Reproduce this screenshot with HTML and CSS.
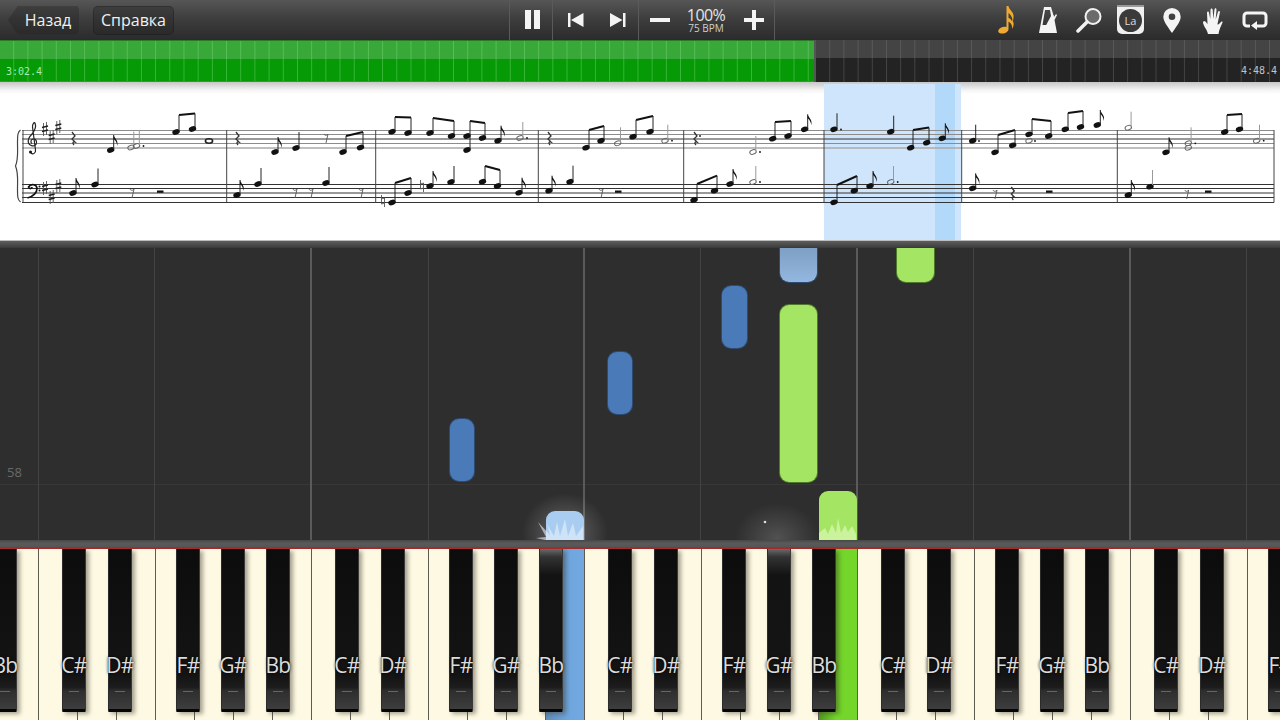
FILE: index.html
```html
<!DOCTYPE html>
<html lang="ru">
<head>
<meta charset="utf-8">
<title>Synthesia</title>
<link rel="stylesheet" href="styles.css">
</head>
<body>
<div class="app">
  <header class="topbar">
    <div class="nav">
      <div class="btn back">Назад</div>
      <div class="btn help">Справка</div>
    </div>
    <div class="cell pause"><svg width="16" height="20" viewBox="0 0 16 20"><path class="ic" d="M0 0h6v19H0zM9 0h6v19H9z"/></svg></div>
    <div class="cell skip">
      <svg width="16" height="14" viewBox="0 0 16 14"><path class="ic" d="M0 0h2.500v14H0zM15.500 0v14L3 7z"/></svg>
      <svg width="16" height="14" viewBox="0 0 16 14"><path class="ic" d="M13 0h2.500v14H13zM0 0v14L12.500 7z"/></svg>
    </div>
    <div class="cell tempo">
      <svg width="20" height="4" viewBox="0 0 20 4"><path class="ic" d="M0 0h20v4H0z"/></svg>
      <div class="speed"><div class="pct">100%</div><div class="bpm">75 BPM</div></div>
      <svg width="20" height="20" viewBox="0 0 20 20"><path class="ic" d="M8 0h4v8h8v4h-8v8H8v-8H0V8h8z"/></svg>
    </div>
    <div class="tools">
      <svg width="20" height="28" viewBox="0 0 20 28"><path class="gold" d="M9.500 0H11.500c.5 4 6 6 5 11.500-.3 1.500-.3 2.500-.5 4 1.500 3 0 6-1 7.500.5-3-.5-6-3.500-7.500V23c0 2.500-3 4.500-6 4.500-3 .3-5-1.500-4-3.500 1-2.500 5-4 8-3zM11.500 7v5c2 .5 3 2 3.700 3.500.8-3-1-6.500-3.700-8.500z"/></svg>
      <svg class="wide" width="18" height="26" viewBox="0 0 18 26"><path class="ic" fill-rule="evenodd" d="M5 0h7l3 10 2-3 1 1-2.500 5L18 26H0zM6 3 3.500 18h3.700L12 9l-1-6z"/><path class="ic" d="M9 18 14 8l1 1-4 9z"/></svg>
      <svg width="27" height="26" viewBox="0 0 27 26"><circle cx="17" cy="9.500" r="7.500" fill="#6b6b6b" stroke="#f2f2f2" stroke-width="2"/><path d="M11 15 2 24" stroke="#f2f2f2" stroke-width="3.500" stroke-linecap="round"/></svg>
      <div class="la"><span>La</span></div>
      <svg width="18" height="25" viewBox="0 0 18 25"><path class="ic" fill-rule="evenodd" d="M9 0a8.700 8.700 0 0 1 8.700 8.700C17.700 14 12 20 9 25 6 20 .300 14 .300 8.700A8.700 8.700 0 0 1 9 0zm0 5.500a3.300 3.300 0 1 0 0 6.600 3.300 3.300 0 0 0 0-6.600z"/></svg>
      <svg class="wide" width="20" height="27" viewBox="0 0 20 27"><path class="ic" d="M5 27c-1-5-5-8-5-12l1-1c2 0 3 3 3.500 3L4 6c0-2 1.800-2 2-.3L7.300 12 7.500 3c0-2 2-2 2.200 0l.6 9 1.200-9.500c.3-2 2.200-1.700 2 .3l-.8 9.700 2.300-7.500c.5-1.600 2.200-1 1.900.6L14.500 17c.3 2 3-2 4-2.500.8-.3 1.300.3 1 1C18 19 16 23 15.500 27z"/></svg>
      <svg width="26" height="19" viewBox="0 0 26 19"><path class="loop" d="M8 15H5a3 3 0 0 1-3-3V5a3 3 0 0 1 3-3h16a3 3 0 0 1 3 3v7a3 3 0 0 1-3 3h-7"/><path class="ic" d="M15 10v9l-6-4.500z"/></svg>
    </div>
  </header>

  <section class="progress">
    <div class="played"><span class="time">3:02.4</span></div>
    <div class="remain"><span class="time end">4:48.4</span></div>
  </section>

  <section class="sheet">
    <svg class="score" width="1280" height="158" viewBox="0 82 1280 158">
      <defs>
        <g id="h"><ellipse class="nh" rx="3.800" ry="2.600" transform="rotate(-20)"/></g>
        <g id="o"><ellipse class="hollow" rx="3.300" ry="2.200" transform="rotate(-20)"/></g>
        <g id="q"><use href="#h"/><path class="st" d="M3 -1V-16"/></g>
        <g id="e"><use href="#h"/><path class="st" d="M3 -1V-15"/><path class="nf" d="M3 -15c1 4 5 5 3.500 11 0-3-2-6-3.500-7z"/></g>
        <g id="d"><use href="#o"/><path class="pale" d="M2.800 -1V-16"/><circle class="nf" cx="7" cy="0" r=".9"/></g>
        <g id="n"><use href="#o"/><path class="pale" d="M2.800 -1V-16"/></g>
        <g id="r8"><path class="thin" d="M-2 -4c1 2 3 1.500 4 0L0 5"/></g>
        <g id="r4"><path class="rest" d="M-1 -7 2 -3 -1 0 2 3c-2-.5-3 1-1 3"/></g>
        <g id="s"><path class="thin" d="M-1.500 -6V7M1.500 -7V6"/><path class="sb" d="M-3 -1.500 3 -3M-3 2.500 3 1"/></g>
        <g id="nat"><path class="thin" d="M-1.500 -6V3M1.500 -3V6M-1.500 -2 1.500 -3M-1.500 3 1.500 2"/></g>
      </defs>
      <rect x="824" y="84" width="137" height="156" fill="#cfe5fb"/>
      <rect x="935" y="84" width="20" height="156" fill="#b2d8fa"/>

      <path class="l1" d="M22 130.500H1274M22 134.500H1274M22 143.500H1274"/>
      <path class="l2" d="M22 139H1274M22 184.500H1274M22 188.500H1274M22 193H1274M22 197.500H1274M22 202.500H1274"/>
      <path class="l3" d="M22 148H1274"/>
      <path class="bar" d="M226.700 130V202.500M375.700 130V202.500M538.300 130V202.500M683.700 130V202.500M824 130V202.500M961.700 130V202.500M1117.300 130V202.500M1274 130V202.500M23 130V202.500"/>
      <path class="brace" d="M20.500 130c-3 2-3 6-3 12 0 11 1 17-2 24 3 7 2 13 2 24 0 6 0 10 3 12"/>

      <path class="clef" d="M31 153c2 2 5 0 4.500-3L32.500 127c-.3-3 2-5.500 2.500-4 1.500 4-.5 8-3 11-3 3-4.500 6-3.500 9 1 3 6 4 7.500 1.500 1.500-2.500 0-6-3-5.500-2 .3-3 3-1 4.500"/>
      <circle class="nf" cx="30.500" cy="152" r="1.500"/>
      <path class="clefb" d="M27.500 198c6-1.500 9.500-5.500 9.500-9.500 0-4-6-5.500-8.500-1.500 1 2.500 3.500 1.500 3.500 0"/>
      <circle class="nf" cx="39.500" cy="186.500" r="1"/><circle class="nf" cx="39.500" cy="190.500" r="1"/>
      <use href="#s" x="45" y="129"/><use href="#s" x="51.700" y="137"/><use href="#s" x="58.300" y="127"/>
      <use href="#s" x="45" y="188"/><use href="#s" x="51.700" y="197"/><use href="#s" x="58.300" y="186"/>

      <path class="beam" d="M179 115 195 113.500M346 136 363 132M395 117 411 117.500M433 118 454 121M470 121 485 123M589 130 604 126M636 120 653 116M775 122 791 121M913 130 929 127.500M998 135 1015 130M1032 119 1051 121M1068 113 1083 111M1227 115 1242 114M395 183 411 178M485 166 500 170M697 184 717 175.700M837 185 857 176"/>
      <path class="st" d="M179 132V115M195 129V113.500M346 152V136M363 147V132M395 131V117M411 133V117.500M433 133V118M454 136V121M470 150V121M485 138V123M589 147V130M604 140V126M636 136V120M653 131V116M775 138V122M791 136V121M913 147V130M929 142V127.500M998 152V135M1015 145V130M1032 134V119M1051 136V121M1068 129V113M1083 127V111M1227 132V115M1242 129V114M395 202V183M411 193V178M485 181V166M500 186V170M697 200V184M717 190V175.700M837 202V185M857 190V176"/>

      <use href="#r4" x="73" y="139"/><use href="#e" x="110.700" y="150"/><use href="#n" x="131" y="147.500"/><use href="#d" x="136.500" y="146"/>
      <use href="#h" x="176" y="132"/><use href="#h" x="192.500" y="129"/><ellipse class="whole" cx="209" cy="141" rx="3.600" ry="2.200"/>
      <use href="#e" x="73" y="193"/><use href="#q" x="95" y="184.500"/><use href="#r8" x="132" y="193"/><rect class="nf" x="157" y="190.500" width="6.500" height="2.300"/>

      <use href="#r4" x="237" y="139"/><use href="#e" x="275" y="152"/><use href="#q" x="296" y="148"/><use href="#r8" x="326" y="138"/>
      <use href="#h" x="343" y="152"/><use href="#h" x="360.500" y="147.500"/>
      <use href="#e" x="237" y="195"/><use href="#q" x="258" y="184"/><use href="#r8" x="295" y="193"/><use href="#r8" x="311" y="193"/><use href="#q" x="326" y="183"/><use href="#r8" x="361" y="193"/>

      <use href="#h" x="392" y="131.700"/><use href="#h" x="408" y="133"/><use href="#h" x="430" y="133"/><use href="#h" x="451.500" y="136"/>
      <use href="#h" x="467" y="136"/><use href="#h" x="467" y="150"/><use href="#h" x="482.500" y="138"/><use href="#e" x="498" y="140.700"/><use href="#d" x="520" y="138"/>
      <use href="#nat" x="383" y="201"/><use href="#h" x="392" y="202.500"/><use href="#h" x="408" y="193"/><use href="#nat" x="422" y="186"/><use href="#e" x="430" y="186"/><use href="#q" x="451" y="182"/>
      <use href="#h" x="482.500" y="181.700"/><use href="#h" x="497.500" y="186"/><use href="#e" x="519" y="192.700"/>

      <use href="#r4" x="549" y="139"/><use href="#h" x="586" y="147.700"/><use href="#h" x="601" y="140.700"/><use href="#n" x="617.700" y="143.300"/><use href="#h" x="633" y="136.700"/><use href="#h" x="650" y="131.700"/><use href="#d" x="665" y="140.700"/>
      <use href="#e" x="549" y="190.700"/><use href="#q" x="570" y="181.700"/><use href="#r8" x="601" y="193"/><rect class="nf" x="615" y="190.500" width="6.500" height="2.300"/>

      <use href="#r4" x="695" y="139"/><circle class="nf" cx="700" cy="136" r=".9"/><use href="#d" x="753" y="152"/><use href="#h" x="772.700" y="138.700"/><use href="#h" x="788" y="136"/><use href="#e" x="804.700" y="129.300"/>
      <use href="#h" x="694" y="200"/><use href="#h" x="714.500" y="190.700"/><use href="#e" x="730" y="184"/><use href="#d" x="753" y="182"/>

      <use href="#q" x="834" y="129.300"/><circle class="nf" cx="841" cy="129.500" r=".9"/><use href="#q" x="890.700" y="131.700"/><use href="#h" x="910.700" y="147.700"/><use href="#h" x="926.700" y="142.700"/><use href="#e" x="942.300" y="138.300"/>
      <use href="#h" x="834" y="202.300"/><use href="#h" x="854.300" y="190.700"/><use href="#e" x="870" y="186"/><use href="#d" x="890.700" y="182"/>

      <use href="#q" x="972.700" y="140.700"/><circle class="nf" cx="979" cy="141" r=".9"/><use href="#h" x="995" y="152.300"/><use href="#h" x="1012.700" y="145.300"/>
      <use href="#h" x="1029" y="134.300"/><use href="#o" x="1029" y="140.700"/><circle class="nf" cx="1035" cy="141" r=".9"/><use href="#h" x="1048.700" y="136"/><use href="#h" x="1065.300" y="129.300"/><use href="#h" x="1080.500" y="127"/><use href="#e" x="1097.300" y="125"/>
      <use href="#e" x="972.700" y="188.300"/><use href="#r8" x="995" y="194"/><use href="#r4" x="1012.300" y="194"/><rect class="nf" x="1046" y="190.500" width="6.500" height="2.300"/>

      <use href="#n" x="1128.300" y="127.700"/><use href="#e" x="1166" y="152.300"/><use href="#d" x="1188.300" y="143.300"/><use href="#o" x="1188.300" y="147.700"/><use href="#h" x="1224.700" y="132"/><use href="#h" x="1239.500" y="129.300"/><use href="#d" x="1256.700" y="140.700"/>
      <use href="#e" x="1128.300" y="195"/><use href="#h" x="1150" y="186.700"/><path class="pale" d="M1152.500 185V170"/><use href="#r8" x="1186.700" y="194"/><rect class="nf" x="1205" y="190.500" width="6.500" height="2.300"/>
    </svg>
  </section>

  <div class="divider"></div>

  <section class="roll">
    <i class="hline"></i>
    <i class="grid" style="left:38px"></i><i class="grid" style="left:154px"></i><i class="grid major" style="left:310px"></i><i class="grid" style="left:428px"></i><i class="grid major" style="left:583px"></i><i class="grid" style="left:700px"></i><i class="grid major" style="left:856px"></i><i class="grid" style="left:973px"></i><i class="grid major" style="left:1129px"></i><i class="grid" style="left:1246px"></i>
    <span class="octave">58</span>
    <div class="halo halo-a"></div>
    <div class="halo halo-b"></div>
    <div class="note blue" style="left:450px;top:171px;width:24px;height:62px"></div>
    <div class="note blue" style="left:608px;top:104px;width:24px;height:62px"></div>
    <div class="note blue" style="left:722px;top:38px;width:25px;height:62px"></div>
    <div class="note pale-blue cut" style="left:780px;top:0;width:37px;height:34px"></div>
    <div class="note green" style="left:780px;top:57px;width:37px;height:177px"></div>
    <div class="note green cut" style="left:897px;top:0;width:37px;height:34px"></div>
    <div class="note green active" style="left:819px;top:243px;width:38px;height:49px"></div>
    <div class="note lit active" style="left:546px;top:263px;width:38px;height:29px"></div>
    <svg class="sparks" width="1280" height="292" viewBox="0 248 1280 292">
      <path class="spark-b" d="M538 522 550 535 547 524 554 536 557 522 560 536 565 519 568 536 573 523 576 536 583 526V540H545L536 538 546 537z"/>
      <path class="spark-g" d="M819 533 825 528 828 534 832 524 836 533 838 518 841 533 845 525 848 532 852 526 856 534V540H819z"/>
      <circle cx="765" cy="522" r="1.300" fill="#ddd"/>
    </svg>
  </section>

  <div class="keybar"></div>

  <section class="keyboard">
    <div class="whites">
      <i></i><i></i><i></i><i></i><i></i><i></i><i></i><i></i><i></i><i></i><i></i><i></i><i></i><i></i>
      <i class="key-blue"></i>
      <i></i><i></i><i></i><i></i><i></i><i></i>
      <i class="key-green"></i>
      <i></i><i></i><i></i><i></i><i></i><i></i><i></i><i></i><i></i><i></i><i></i><i></i>
    </div>
    <div class="black" style="left:-7px"><span>Bb</span></div>
    <div class="black" style="left:62px"><span>C#</span></div>
    <div class="black" style="left:108px"><span>D#</span></div>
    <div class="black" style="left:176px"><span>F#</span></div>
    <div class="black" style="left:221px"><span>G#</span></div>
    <div class="black" style="left:266px"><span>Bb</span></div>
    <div class="black" style="left:335px"><span>C#</span></div>
    <div class="black" style="left:381px"><span>D#</span></div>
    <div class="black" style="left:449px"><span>F#</span></div>
    <div class="black" style="left:494px"><span>G#</span></div>
    <div class="black glow" style="left:539px"><span>Bb</span></div>
    <div class="black" style="left:608px"><span>C#</span></div>
    <div class="black" style="left:654px"><span>D#</span></div>
    <div class="black" style="left:722px"><span>F#</span></div>
    <div class="black glow" style="left:767px"><span>G#</span></div>
    <div class="black" style="left:812px"><span>Bb</span></div>
    <div class="black" style="left:881px"><span>C#</span></div>
    <div class="black" style="left:927px"><span>D#</span></div>
    <div class="black" style="left:995px"><span>F#</span></div>
    <div class="black" style="left:1040px"><span>G#</span></div>
    <div class="black" style="left:1085px"><span>Bb</span></div>
    <div class="black" style="left:1154px"><span>C#</span></div>
    <div class="black" style="left:1200px"><span>D#</span></div>
    <div class="black" style="left:1268px"><span>F#</span></div>
  </section>
</div>
</body>
</html>
```

FILE: styles.css
```css
* { box-sizing: border-box; }
html, body { margin: 0; padding: 0; background: #2e2e2e; }
body { width: 1280px; height: 720px; overflow: hidden; font-family: "Open Sans", "Liberation Sans", sans-serif; }
.app { width: 1280px; height: 720px; display: flex; flex-direction: column; overflow: hidden; }

/* top bar */
.topbar { height: 40px; flex: none; display: flex; background: linear-gradient(#565656, #3e3e3e 45%, #2b2b2b); }
.nav { width: 509px; flex: none; display: flex; align-items: center; gap: 14px; padding-left: 8px; }
.btn { height: 29px; display: flex; align-items: center; justify-content: center; color: #f0f0f0; font-size: 16px; background: rgba(30, 30, 30, .32); border-radius: 5px; }
.back { width: 71px; padding-left: 9px; border-radius: 0; clip-path: path("M0 14.500L10 0H66Q71 0 71 5V24Q71 29 66 29H10Z"); }
.help { width: 81px; border: 1px solid rgba(20, 20, 20, .3); }
.cell { height: 40px; flex: none; display: flex; align-items: center; border-left: 1px solid #5a5a5a; }
.pause { width: 43px; padding-left: 15px; }
.pause svg { margin-top: -1px; }
.skip { width: 86px; padding-left: 15px; gap: 26px; }
.skip svg { margin-top: -1px; }
.tempo { width: 137px; padding-left: 11px; justify-content: flex-start; border-right: 1px solid #5a5a5a; }
.speed { width: 72px; margin-right: 2px; text-align: center; color: #e4e4e4; }
.pct { font-size: 16px; line-height: 16px; letter-spacing: -.6px; }
.bpm { font-size: 10px; line-height: 11px; color: #cfcfcf; }
.ic { fill: #f4f4f4; }
.gold { fill: #eeaa33; }
.loop { fill: none; stroke: #f4f4f4; stroke-width: 3; }
.tools { flex: 1; display: flex; align-items: center; gap: 19px; padding-left: 222px; }
.tools .wide { margin-left: 3px; }
.la { width: 27px; height: 29px; margin: -2px 0 0 -5px; border-radius: 0 0 5px 5px; background: #f0f0f0; border-top: 2px solid #999; display: flex; align-items: center; justify-content: center; }
.la span { width: 23px; height: 23px; border-radius: 50%; background: #3a3a3a; color: #ddd; font-size: 11px; line-height: 23px; text-align: center; }

/* progress */
.progress { height: 42px; flex: none; display: flex; }
.played, .remain { position: relative; height: 42px; }
.played { width: 814px; flex: none; border-top: 1px solid #2a7a2a; border-bottom: 1px solid #3f8f3f;
  background:
    linear-gradient(90deg, transparent 0 13.200px, rgba(130, 225, 130, .4) 13.200px),
    linear-gradient(#38a838 0 18px, #069a06 18px);
  background-size: 14.200px 100%, 100% 100%; }
.remain { flex: 1; border-left: 2px solid #555;
  background:
    linear-gradient(90deg, transparent 0 13.200px, rgba(130, 130, 130, .35) 13.200px),
    linear-gradient(#444 0 18px, #232323 18px);
  background-size: 14.200px 100%, 100% 100%; }
.time { position: absolute; top: 25px; left: 6px; font: 10px/12px "DejaVu Sans Mono", monospace; color: #a6eca6; }
.end { left: auto; right: 3px; color: #c4c4c4; }

/* sheet */
.sheet { height: 158px; flex: none; background: linear-gradient(#c6c6c6, #f4f4f4 8px, #fff 12px); }
.score { display: block; }
.nh, .nf { fill: #111; }
.hollow { fill: none; stroke: #666; stroke-width: 1; }
.whole { fill: none; stroke: #222; stroke-width: 1.600; }
.st { stroke: #222; stroke-width: 1; fill: none; }
.sb { stroke: #222; stroke-width: 1.400; fill: none; }
.pale { stroke: #999; stroke-width: 1; fill: none; }
.thin { stroke: #555; stroke-width: .9; fill: none; }
.rest { stroke: #333; stroke-width: 1.300; fill: none; }
.beam { stroke: #111; stroke-width: 2; fill: none; }
.l1 { stroke: #8c8c8c; stroke-width: 1; }
.l2 { stroke: #333; stroke-width: 1; }
.l3 { stroke: #aaa; stroke-width: 1.500; }
.bar { stroke: #444; stroke-width: 1; }
.brace { fill: none; stroke: #444; stroke-width: 1.200; }
.clef { fill: none; stroke: #222; stroke-width: 1.200; }
.clefb { fill: none; stroke: #111; stroke-width: 1.700; }

.divider { height: 8px; flex: none; background: linear-gradient(#bdbdbd 0 1px, #5e5e5e 1px, #3a3a3a); }

/* roll */
.roll { position: relative; height: 292px; flex: none; background: #2e2e2e; overflow: hidden; }
.hline { position: absolute; left: 0; right: 0; top: 236px; height: 1px; background: #383838; }
.grid { position: absolute; top: 0; bottom: 0; width: 1px; background: #434343; }
.major { width: 2px; background: #5a5a5a; }
.octave { position: absolute; left: 7px; top: 216px; font-size: 13px; line-height: 16px; color: #6a6a6a; }
.note { position: absolute; border-radius: 9px; }
.blue { background: #4a7ab8; box-shadow: 0 0 0 1px #2d4b73; }
.pale-blue { background: linear-gradient(#7f9fc4, #93b7e0); box-shadow: 0 0 0 1px #2d4b73; }
.green { background: #a4e664; box-shadow: 0 0 0 1px #507a2b; }
.cut { border-radius: 0 0 9px 9px; }
.active { box-shadow: none; border-radius: 9px 9px 0 0; }
.lit { background: #a9cdf0; }
.halo { position: absolute; border-radius: 50%; }
.halo-a { left: 522px; top: 245px; width: 86px; height: 80px; background: radial-gradient(closest-side, rgba(255, 255, 255, .28), transparent); }
.halo-b { left: 735px; top: 255px; width: 84px; height: 70px; background: radial-gradient(closest-side, rgba(255, 255, 255, .17), transparent); }
.sparks { position: absolute; left: 0; top: 0; }
.spark-b { fill: #e8f2fb; opacity: .6; }
.spark-g { fill: #d2f5a4; opacity: .85; }

.keybar { height: 9px; flex: none; background: linear-gradient(#474747, #5a5a5a 35%, #555 80%, #a52a2a 82%, #a52a2a); }

/* keyboard */
.keyboard { position: relative; flex: 1; overflow: hidden; background: #fdf9e3; }
.whites { display: flex; height: 100%; margin-left: -.5px; }
.whites i { flex: none; width: 39px; height: 100%; border-right: 1.500px solid #5c5c50; background: #fdf9e3; }
.whites .key-blue { background: linear-gradient(90deg, #5f8dbc, #6fa6de 60%, #73a9e0); }
.whites .key-green { background: linear-gradient(90deg, #4f9a1c, #74d62a 45%, #74d62a); }
.black { position: absolute; top: 0; width: 24px; height: 163px; border-radius: 0 0 1px 1px;
  background: linear-gradient(#0c0c0c 0, #141414 78%, #1d1d1d 85%, #2e2e2e 87%, #3d3d3d 98%, #050505 98%);
  border-left: 1px solid #2c2c2c; border-right: 1px solid #3a3a3a;
  box-shadow: 3px 2px 4px rgba(60, 55, 40, .45); display: flex; justify-content: center; }
.black::after { content: ""; position: absolute; left: 6px; right: 6px; top: 142px; height: 1px; background: #666; }
.glow { background: linear-gradient(#6a6a6a 0, #333 8px, #131313 26px, #141414 78%, #1d1d1d 85%, #2e2e2e 87%, #3d3d3d 98%, #050505 98%); }
.black span { position: absolute; top: 102px; left: 50%; transform: translateX(-50%); font-size: 21px; line-height: 28px; letter-spacing: -.6px; color: #dcdcdc; text-shadow: 0 0 3px #000; white-space: nowrap; }
```
